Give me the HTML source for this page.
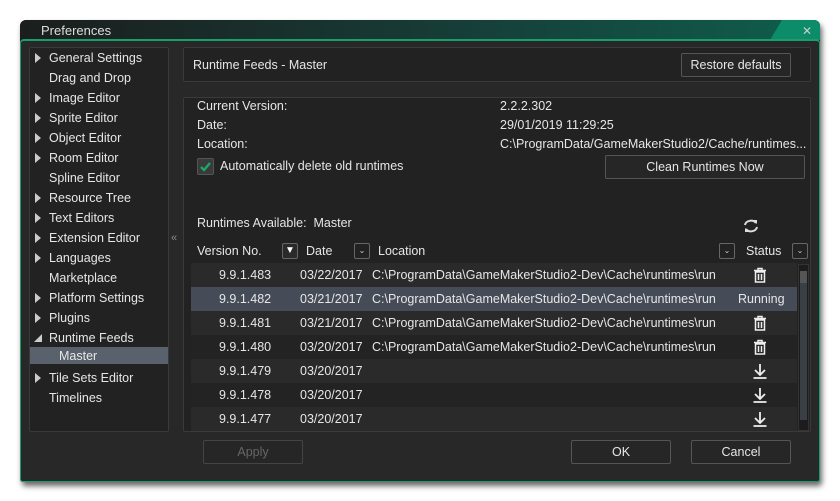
<!DOCTYPE html><html><head><style>
*{box-sizing:border-box;margin:0;padding:0}
body{width:840px;height:501px;background:#fff;font-family:"Liberation Sans",sans-serif;font-size:12.5px;color:#e6e6e6;position:relative;overflow:hidden}
.a{position:absolute}
.win{left:20px;top:20px;width:800px;height:462px;background:#282828;border-radius:6px 6px 3px 3px;box-shadow:2px 4px 6px rgba(0,0,0,.6)}
.title{left:20px;top:20px;width:800px;height:20px;border-radius:6px 6px 0 0;background:linear-gradient(90deg,#1b1e1d 0%,#173a35 50%,#0f5e4c 100%)}
.body{left:20px;top:39px;width:800px;height:443px;border:1px solid #17a06c;border-top:2px solid #17a06c;border-radius:4px 4px 3px 3px;background:#282828}
.panel{background:#222;border:1px solid #3a3a3a;border-radius:2px}
.btn{border:1px solid #555;border-radius:2px;background:#262626;text-align:center;color:#e6e6e6}
.tri{position:absolute;left:35px;width:0;height:0;border-left:6px solid #ccc;border-top:5px solid transparent;border-bottom:5px solid transparent}
.li{position:absolute;left:49px}
.row{position:absolute;left:191px;width:606px;height:24px;line-height:24px}
.row span{position:absolute}
.row svg{position:absolute;left:561px;top:4px}
.dd{position:absolute;width:16px;height:16px;border:1px solid #666;border-radius:2px;font-size:8px;text-align:center;line-height:14px;color:#ccc}
</style></head><body>
<div class="a win"></div>
<div class="a title"></div>
<div class="a" style="left:770px;top:20px;width:50px;height:20px;background:#0d8c6a;border-radius:0 6px 0 0;clip-path:polygon(12px 0,100% 0,100% 100%,0 100%)"></div>
<div class="a" style="left:41px;top:23px;font-size:13px;color:#ddd">Preferences</div>
<div class="a" style="left:802px;top:24px;font-size:12px;color:#ccc">✕</div>
<div class="a body"></div>
<div class="a panel" style="left:29px;top:47px;width:140px;height:385px"></div>
<div class="a" style="left:30px;top:347px;width:138px;height:17px;background:#59616c"></div>
<div class="tri" style="top:53px"></div><div class="li" style="top:51px">General Settings</div>
<div class="li" style="top:71px">Drag and Drop</div>
<div class="tri" style="top:93px"></div><div class="li" style="top:91px">Image Editor</div>
<div class="tri" style="top:113px"></div><div class="li" style="top:111px">Sprite Editor</div>
<div class="tri" style="top:133px"></div><div class="li" style="top:131px">Object Editor</div>
<div class="tri" style="top:153px"></div><div class="li" style="top:151px">Room Editor</div>
<div class="li" style="top:171px">Spline Editor</div>
<div class="tri" style="top:193px"></div><div class="li" style="top:191px">Resource Tree</div>
<div class="tri" style="top:213px"></div><div class="li" style="top:211px">Text Editors</div>
<div class="tri" style="top:233px"></div><div class="li" style="top:231px">Extension Editor</div>
<div class="tri" style="top:253px"></div><div class="li" style="top:251px">Languages</div>
<div class="li" style="top:271px">Marketplace</div>
<div class="tri" style="top:293px"></div><div class="li" style="top:291px">Platform Settings</div>
<div class="tri" style="top:313px"></div><div class="li" style="top:311px">Plugins</div>
<div class="a" style="left:34px;top:334px;width:0;height:0;border-right:8px solid #ccc;border-top:8px solid transparent"></div><div class="li" style="top:331px">Runtime Feeds</div>
<div class="li" style="left:59px;top:349px">Master</div>
<div class="tri" style="top:373px"></div><div class="li" style="top:371px">Tile Sets Editor</div>
<div class="li" style="top:391px">Timelines</div>
<div class="a" style="left:171px;top:232px;color:#888;font-size:11px">«</div>
<div class="a panel" style="left:183px;top:47px;width:628px;height:35px"></div>
<div class="a" style="left:193px;top:58px">Runtime Feeds - Master</div>
<div class="a btn" style="left:681px;top:53px;width:110px;height:24px;line-height:22px">Restore defaults</div>
<div class="a panel" style="left:183px;top:97px;width:628px;height:335px"></div>
<div class="a" style="left:197px;top:99px">Current Version:</div>
<div class="a" style="left:197px;top:118px">Date:</div>
<div class="a" style="left:197px;top:137px">Location:</div>
<div class="a" style="left:500px;top:99px">2.2.2.302</div>
<div class="a" style="left:500px;top:118px">29/01/2019 11:29:25</div>
<div class="a" style="left:500px;top:137px;width:310px;white-space:nowrap;overflow:hidden">C:\ProgramData/GameMakerStudio2/Cache/runtimes...</div>
<div class="a" style="left:197px;top:158px;width:17px;height:17px;background:#3a3a3a;border:1px solid #555;border-radius:2px"><svg width="15" height="15"><path d="M3 8l3 3 6-7" stroke="#1aa866" stroke-width="2.4" fill="none"/></svg></div>
<div class="a" style="left:220px;top:159px">Automatically delete old runtimes</div>
<div class="a btn" style="left:605px;top:155px;width:200px;height:24px;line-height:22px">Clean Runtimes Now</div>
<div class="a" style="left:197px;top:216px">Runtimes Available:&nbsp; Master</div>
<div class="a" style="left:742px;top:218px"><svg width="18" height="16"><path d="M3 7a6 5 0 0 1 11-2M15 9a6 5 0 0 1-11 2" stroke="#ddd" stroke-width="2" fill="none"/><path d="M11 2l4 0 0 4zM7 14l-4 0 0-4z" fill="#ddd"/></svg></div>
<div class="a" style="left:197px;top:244px">Version No.</div>
<div class="dd" style="left:282px;top:243px;background:#2a2a2a;font-size:10px;color:#fff">▼</div>
<div class="a" style="left:306px;top:244px">Date</div>
<div class="dd" style="left:354px;top:243px">⌄</div>
<div class="a" style="left:378px;top:244px">Location</div>
<div class="dd" style="left:719px;top:243px">⌄</div>
<div class="a" style="left:746px;top:244px">Status</div>
<div class="dd" style="left:792px;top:243px">⌄</div>
<div class="row" style="top:263px;background:#2a2a2a"><span style="left:28px">9.9.1.483</span><span style="left:109px">03/22/2017</span><span style="left:181px">C:\ProgramData\GameMakerStudio2-Dev\Cache\runtimes\run</span><svg width="16" height="17"><path d="M2 3.5h12M6 3.5V1.5h4v2M3.5 5h9v10h-9z M6.5 7v6M9.5 7v6" stroke="#eee" stroke-width="1.5" fill="none"/></svg></div>
<div class="row" style="top:287px;background:#464c57"><span style="left:28px">9.9.1.482</span><span style="left:109px">03/21/2017</span><span style="left:181px">C:\ProgramData\GameMakerStudio2-Dev\Cache\runtimes\run</span><span style="left:547px">Running</span></div>
<div class="row" style="top:311px;background:#2a2a2a"><span style="left:28px">9.9.1.481</span><span style="left:109px">03/21/2017</span><span style="left:181px">C:\ProgramData\GameMakerStudio2-Dev\Cache\runtimes\run</span><svg width="16" height="17"><path d="M2 3.5h12M6 3.5V1.5h4v2M3.5 5h9v10h-9z M6.5 7v6M9.5 7v6" stroke="#eee" stroke-width="1.5" fill="none"/></svg></div>
<div class="row" style="top:335px;background:#232323"><span style="left:28px">9.9.1.480</span><span style="left:109px">03/20/2017</span><span style="left:181px">C:\ProgramData\GameMakerStudio2-Dev\Cache\runtimes\run</span><svg width="16" height="17"><path d="M2 3.5h12M6 3.5V1.5h4v2M3.5 5h9v10h-9z M6.5 7v6M9.5 7v6" stroke="#eee" stroke-width="1.5" fill="none"/></svg></div>
<div class="row" style="top:359px;background:#2a2a2a"><span style="left:28px">9.9.1.479</span><span style="left:109px">03/20/2017</span><svg width="16" height="17"><path d="M8 1v11M3 7l5 5 5-5M1.5 15h13" stroke="#eee" stroke-width="1.8" fill="none"/></svg></div>
<div class="row" style="top:383px;background:#232323"><span style="left:28px">9.9.1.478</span><span style="left:109px">03/20/2017</span><svg width="16" height="17"><path d="M8 1v11M3 7l5 5 5-5M1.5 15h13" stroke="#eee" stroke-width="1.8" fill="none"/></svg></div>
<div class="row" style="top:407px;background:#2a2a2a;height:24px"><span style="left:28px">9.9.1.477</span><span style="left:109px">03/20/2017</span><svg width="16" height="17"><path d="M8 1v11M3 7l5 5 5-5M1.5 15h13" stroke="#eee" stroke-width="1.8" fill="none"/></svg></div>
<div class="a" style="left:798px;top:264px;width:11px;height:167px;background:#1c1c1c;border:1px solid #333"></div>
<div class="a" style="left:800px;top:280px;width:7px;height:140px;background:#3a3f46"></div>
<div class="a" style="left:800px;top:271px;width:7px;height:12px;background:#555"></div>
<div class="a btn" style="left:203px;top:440px;width:100px;height:24px;line-height:22px;color:#666;border-color:#444">Apply</div>
<div class="a btn" style="left:571px;top:440px;width:100px;height:24px;line-height:22px">OK</div>
<div class="a btn" style="left:691px;top:440px;width:100px;height:24px;line-height:22px">Cancel</div>
</body></html>
